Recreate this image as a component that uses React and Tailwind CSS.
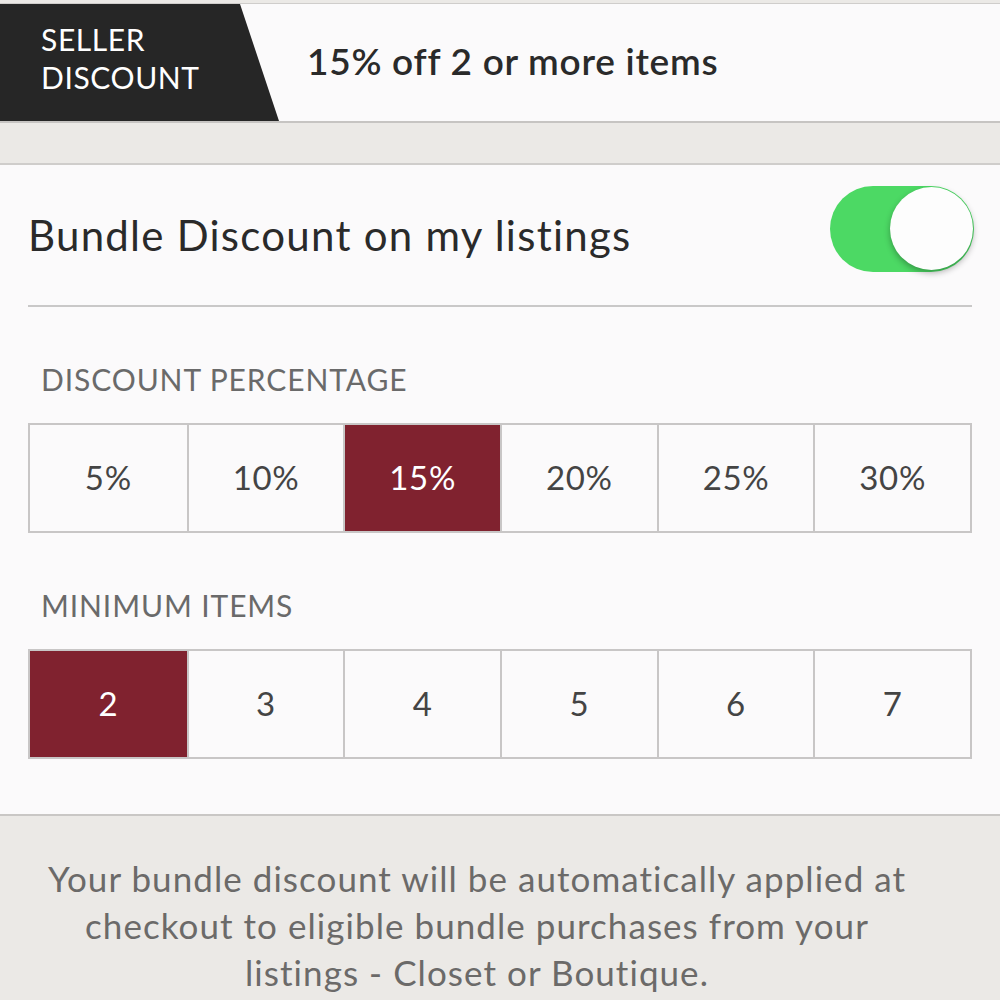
import React, { useState } from "react";

const percents = ["5%", "10%", "15%", "20%", "25%", "30%"];
const minItems = ["2", "3", "4", "5", "6", "7"];

const Segmented = ({ options, value, onChange }) => {
  return (
    <div className="grid grid-cols-6 border-2 border-[#c8c6c6] bg-[#fbfafb]">
      {options.map((opt, i) => (
        <button
          key={opt}
          onClick={() => onChange(opt)}
          className={`h-[106px] text-[33px] tracking-[0.02em] flex items-center justify-center ${i > 0 ? "border-l-2 border-[#c8c6c6]" : ""} ${
            value === opt ? "bg-[#80222f] text-white" : "text-[#444]"
          }`}
        >
          {opt}
        </button>
      ))}
    </div>
  );
};

export default function App() {
  const [enabled, setEnabled] = useState(true);
  const [percent, setPercent] = useState("15%");
  const [items, setItems] = useState("2");

  return (
    <div className="w-[1000px] h-[1000px] overflow-hidden bg-[#ebe9e6] font-['Lato',sans-serif]">
      {/* header */}
      <div className="h-[4px] bg-[#ebe9e6] border-b border-[#cfcdcb]"></div>
      <div className="h-[119px] flex items-center bg-[#fbfafb] border-b-2 border-[#c6c4c2]">
        <div className="h-full w-[280px] bg-[#262626] [clip-path:polygon(0_0,240px_0,279px_100%,0_100%)] flex flex-col justify-center pb-[9px] pl-[41px] text-white text-[30px] tracking-[0.02em] leading-[38px]">
          <span>SELLER</span>
          <span>DISCOUNT</span>
        </div>
        <div className="pl-[27px] pb-[4px] text-[37px] tracking-[0.02em] font-semibold text-[#2a2a2a]">15% off 2 or more items</div>
      </div>

      <div className="h-[42px] border-b-2 border-[#cfcdcb]"></div>

      {/* card */}
      <div className="bg-[#fbfafb] px-[28px] pb-[55px] border-b-2 border-[#c9c7c5]">
        <div className="h-[142px] flex items-center justify-between border-b-2 border-[#c9c8c8]">
          <span className="text-[42px] tracking-[0.03em] text-[#2a2a2a]">Bundle Discount on my listings</span>
          <button
            onClick={() => setEnabled(!enabled)}
            className={`w-[144px] h-[86px] -mt-[12px] mr-[-2px] rounded-full relative transition-colors ${
              enabled ? "bg-[#4cd964]" : "bg-[#e5e5e5]"
            }`}
          >
            <span
              className={`absolute top-[1px] w-[83px] h-[83px] rounded-full bg-[#fdfdfd] shadow-[0_3px_6px_rgba(0,0,0,0.3)] ${
                enabled ? "right-[1px]" : "left-[1px]"
              }`}
            ></span>
          </button>
        </div>

        <div className="pl-[13px] pt-[55px] pb-[27px] text-[30px] tracking-[0.03em] leading-[34px] text-[#6a6a6a]">DISCOUNT PERCENTAGE</div>
        <Segmented options={percents} value={percent} onChange={setPercent} />

        <div className="pl-[13px] pt-[55px] pb-[27px] text-[30px] tracking-[0.03em] leading-[34px] text-[#6a6a6a]">MINIMUM ITEMS</div>
        <Segmented options={minItems} value={items} onChange={setItems} />
      </div>

      {/* footer note */}
      <p className="pt-[39px] pl-[37px] pr-[83px] text-center text-[35px] tracking-[0.03em] leading-[47px] text-[#6b6a69]">
        Your bundle discount will be automatically applied at checkout to eligible bundle purchases from your listings - Closet or Boutique.
      </p>
    </div>
  );
}
